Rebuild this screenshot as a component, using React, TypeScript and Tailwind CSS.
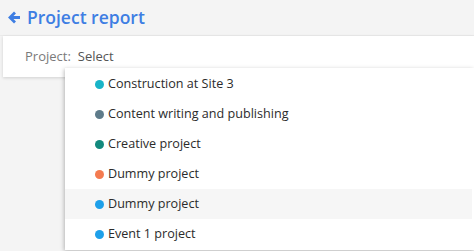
import { FC } from "react";

const projects = [
  { name: "Construction at Site 3", color: "bg-[#19b4c8]" },
  { name: "Content writing and publishing", color: "bg-[#5e7b8a]" },
  { name: "Creative project", color: "bg-[#13897d]" },
  { name: "Dummy project", color: "bg-[#f47b50]" },
  { name: "Dummy project", color: "bg-[#1ea0ea]", hover: true },
  { name: "Event 1 project", color: "bg-[#1ea0ea]" },
];

const ProjectItem: FC<{ name: string; color: string; hover?: boolean }> = ({
  name,
  color,
  hover,
}) => (
  <div
    className={`flex h-[30px] items-center pl-[30px] ${
      hover ? "bg-[#f6f6f6]" : ""
    }`}
  >
    <span className={`mr-[4px] h-[9px] w-[9px] rounded-full ${color}`} />
    <span className="text-[12.6px] text-[#2b2b2b]">{name}</span>
  </div>
);

export default function App() {
  return (
    <div
      className="relative h-[251px] w-[474px] overflow-hidden bg-[#f4f4f4]"
      style={{ fontFamily: '"Open Sans", "Noto Sans", sans-serif' }}
    >
      <div className="flex h-[36px] items-center gap-[7px] border-b border-[#ebebeb] pl-[8px]">
        <svg width="12" height="13" viewBox="0 0 12 13" className="text-[#3e7ee3]">
          <path
            d="M12 6.5H3M7 1.5 2 6.5l5 5"
            fill="none"
            stroke="currentColor"
            strokeWidth="2.8"
          />
        </svg>
        <span className="text-[17.5px] font-semibold text-[#3e7ee3]">Project report</span>
      </div>
      <div className="ml-[3px] flex h-[41px] items-center bg-white pl-[22px] shadow-[0_1px_3px_rgba(0,0,0,0.15)]">
        <span className="text-[13px] text-[#7a7a7a]">Project:</span>
        <span className="ml-[7px] text-[13px] text-[#555]">Select</span>
      </div>

      <div className="absolute left-[65px] top-[68px] w-[409px] bg-white py-px pr-[2px] shadow-[-1px_1px_4px_rgba(0,0,0,0.25)]">
        {projects.map((p, i) => (
          <ProjectItem key={i} name={p.name} color={p.color} hover={p.hover} />
        ))}
      </div>
    </div>
  );
}
